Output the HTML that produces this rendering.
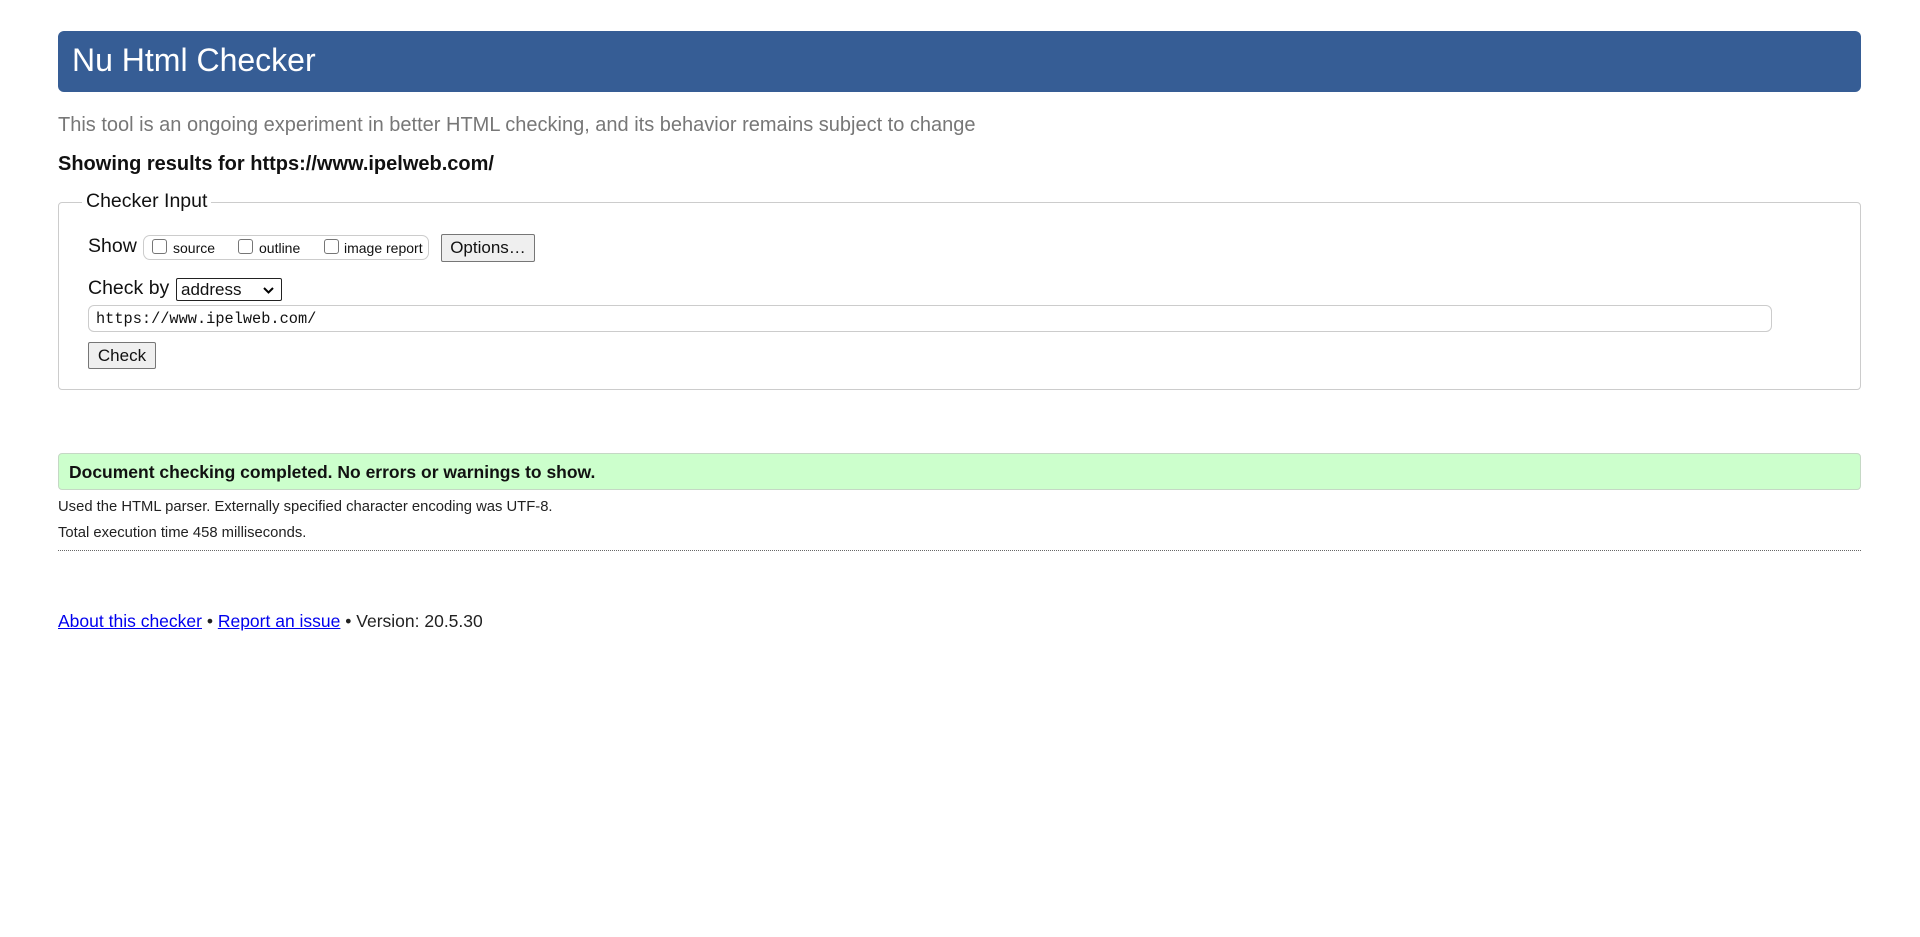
<!DOCTYPE html>
<html><head><meta charset="utf-8"><style>
*{margin:0;padding:0;box-sizing:border-box}
body{width:1920px;height:937px;background:#fff;font-family:"Liberation Sans",Arial,sans-serif;color:#111;position:relative;overflow:hidden}
.a{position:absolute;white-space:nowrap}
#hdr{left:58px;top:31px;width:1803px;height:61px;background:#365d95;border-radius:6px;color:#fff;font-size:32px;padding:11px 0 0 14px}
#tag{left:58px;top:114px;font-size:20px;color:#777}
#show{left:58px;top:153px;font-size:20px;font-weight:bold}
#fs{left:58px;top:202px;width:1803px;height:188px;border:1px solid #ccc;border-radius:4px}
#leg{left:82px;top:190px;background:#fff;padding:0 4px;font-size:19.5px}
.lbl{font-size:19.5px}
#grp{left:143px;top:235px;width:286px;height:25px;border:1px solid #ccc;border-radius:7px;font-size:14px}
.cb{position:absolute;top:3px;width:15px;height:15px;border:1px solid #767676;border-radius:3px;background:#fff}
.ct{position:absolute;top:4px}
.btn{background:#efefef;border:1px solid #767676;border-radius:2px;font-size:17px;text-align:center}
#sel{left:176px;top:278px;width:106px;height:23px;border:1px solid #222;border-radius:2px;font-size:17px;padding:1px 0 0 4px}
#inp{left:88px;top:305px;width:1684px;height:27px;border:1px solid #ccc;border-radius:6px;font-family:"Liberation Mono",monospace;font-size:15.3px;padding:4px 0 0 7px}
#ok{left:58px;top:453px;width:1803px;height:37px;background:#ccffcc;border:1px solid #c5d8c5;border-radius:4px;font-size:17.5px;font-weight:bold;padding:8px 0 0 10px}
.sm{font-size:14.8px;color:#222}
#hr{left:58px;top:550px;width:1803px;border-top:1px dotted #666}
#ft{left:58px;top:611px;font-size:17.5px;color:#222}
#ft a{color:#00e;text-decoration:underline}
</style></head><body>
<div class="a" id="hdr">Nu Html Checker</div>
<div class="a" id="tag">This tool is an ongoing experiment in better HTML checking, and its behavior remains subject to change</div>
<div class="a" id="show">Showing results for https://www.ipelweb.com/</div>
<div class="a" id="fs"></div>
<div class="a" id="leg">Checker Input</div>
<div class="a lbl" style="left:88px;top:235px">Show</div>
<div class="a" id="grp">
<span class="cb" style="left:8px"></span><span class="ct" style="left:29px">source</span>
<span class="cb" style="left:94px"></span><span class="ct" style="left:115px">outline</span>
<span class="cb" style="left:180px"></span><span class="ct" style="left:200px">image report</span>
</div>
<div class="a btn" style="left:441px;top:234px;width:94px;height:28px;padding-top:3px">Options…</div>
<div class="a lbl" style="left:88px;top:277px">Check by</div>
<div class="a" id="sel">address<svg style="position:absolute;right:7px;top:8px" width="11" height="7" viewBox="0 0 11 7"><path d="M1 1l4.5 4.5L10 1" fill="none" stroke="#000" stroke-width="2"/></svg></div>
<div class="a" id="inp">https://www.ipelweb.com/</div>
<div class="a btn" style="left:88px;top:342px;width:68px;height:27px;padding-top:3px">Check</div>
<div class="a" id="ok">Document checking completed. No errors or warnings to show.</div>
<div class="a sm" style="left:58px;top:499px">Used the HTML parser. Externally specified character encoding was UTF-8.</div>
<div class="a sm" style="left:58px;top:525px">Total execution time 458 milliseconds.</div>
<div class="a" id="hr"></div>
<div class="a" id="ft"><a>About this checker</a> • <a>Report an issue</a> • Version: 20.5.30</div>
</body></html>
